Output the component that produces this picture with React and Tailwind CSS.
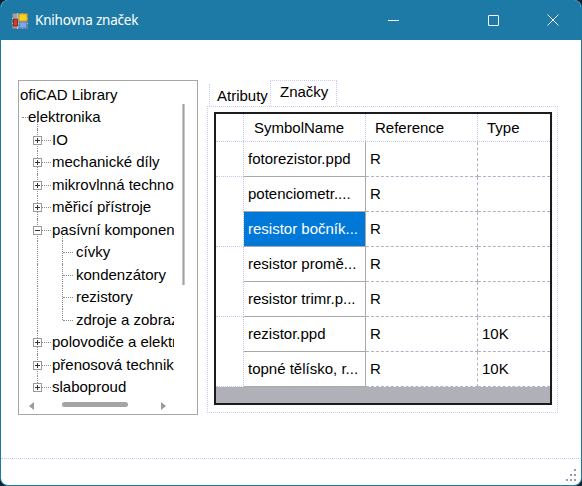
import React from "react";

const treeRows = [
  { text: "ofiCAD Library", x: 20 },
  { text: "elektronika", x: 28, dash: [22, 27], vStart: true },
  { text: "IO", x: 52, box: "+", v1: "full" },
  { text: "mechanické díly", x: 52, box: "+", v1: "full" },
  { text: "mikrovlnná technologie", x: 52, box: "+", v1: "full" },
  { text: "měřicí přístroje", x: 52, box: "+", v1: "full" },
  { text: "pasívní komponenty", x: 52, box: "-", v1: "full", v2Start: true },
  { text: "cívky", x: 76, v1: "full", v2: "full" },
  { text: "kondenzátory", x: 76, v1: "full", v2: "full" },
  { text: "rezistory", x: 76, v1: "full", v2: "full" },
  { text: "zdroje a zobrazovače", x: 76, v1: "full", v2: "half" },
  { text: "polovodiče a elektronky", x: 52, box: "+", v1: "full" },
  { text: "přenosová technika", x: 52, box: "+", v1: "full" },
  { text: "slaboproud", x: 52, box: "+", v1: "half" },
];

const symbols = [
  { name: "fotorezistor.ppd", ref: "R", type: "" },
  { name: "potenciometr....", ref: "R", type: "" },
  { name: "resistor bočník...", ref: "R", type: "", selected: true },
  { name: "resistor promě...", ref: "R", type: "" },
  { name: "resistor trimr.p...", ref: "R", type: "" },
  { name: "rezistor.ppd", ref: "R", type: "10K" },
  { name: "topné tělísko, r...", ref: "R", type: "10K" },
];

function TreeRow({ row }) {
  // x positions are page coords, tree inner starts at x=19
  const off = 19;
  return (
    <div className="relative h-[22.5px] whitespace-nowrap">
      {row.vStart && (
        <span className="absolute left-[18px] top-[15px] bottom-0 border-l border-dotted border-[#8a8a8a]" />
      )}
      {row.v1 && (
        <span
          className={`absolute left-[18px] top-0 border-l border-dotted border-[#8a8a8a] ${
            row.v1 === "half" ? "h-[7px]" : "bottom-0"
          }`}
        />
      )}
      {row.v2Start && (
        <span className="absolute left-[43px] top-[15px] bottom-0 border-l border-dotted border-[#8a8a8a]" />
      )}
      {row.v2 && (
        <span
          className={`absolute left-[43px] top-0 border-l border-dotted border-[#8a8a8a] ${
            row.v2 === "half" ? "h-[11px]" : "bottom-0"
          }`}
        />
      )}
      {row.v2 && (
        <span className="absolute left-[44px] top-[11px] w-[10px] border-t border-dotted border-[#8a8a8a]" />
      )}
      {row.dash && (
        <span className="absolute left-[3px] top-[11px] w-[6px] border-t border-dotted border-[#8a8a8a]" />
      )}
      {row.box && (
        <>
          <span className="absolute left-[23px] top-[11px] w-[9px] border-t border-dotted border-[#8a8a8a]" />
          <span className="absolute left-[14px] top-[7px] w-[9px] h-[9px] border border-[#9a9a9a] bg-white flex items-center justify-center">
            <span className="absolute w-[5px] h-[1px] bg-[#333]" />
            {row.box === "+" && <span className="absolute w-[1px] h-[5px] bg-[#333]" />}
          </span>
        </>
      )}
      <span
        className="absolute top-0 h-full flex items-center text-[15px] text-black"
        style={{ left: row.x - off }}
      >
        {row.text}
      </span>
    </div>
  );
}

function TitleIcon() {
  return (
    <svg width="16" height="16" viewBox="0 0 16 16">
      <rect x="0.5" y="0.5" width="15" height="15" fill="#8fa3b0" stroke="#6f808c" />
      <path d="M0 5.5h16M0 10.5h16M5.5 0v16M10.5 0v16" stroke="#b8c6cf" strokeWidth="1" />
      <rect x="1.5" y="6" width="4" height="7" fill="#d23a2a" stroke="#7d1a12" strokeWidth="0.8" />
      <rect x="7" y="1" width="8" height="7" fill="#f7d21c" stroke="#c49a10" strokeWidth="0.8" />
      <rect x="7.5" y="9" width="7" height="6" fill="#7ea8ea" stroke="#4f7bc4" strokeWidth="0.8" />
    </svg>
  );
}

export default function App() {
  return (
    <div className="w-[582px] h-[486px] bg-[#0d2430] font-['Liberation_Sans',Arial,sans-serif]">
      <div className="w-full h-full flex flex-col rounded-[8px] overflow-hidden border border-t-0 border-[#1c79a5] bg-white">
        {/* Title bar */}
        <div className="h-[40px] shrink-0 bg-[#1d7aa7] flex items-center text-white">
          <div className="ml-[11px] mt-[1px]">
            <TitleIcon />
          </div>
          <span className="ml-[7px] text-[13.5px] font-['Noto_Sans',sans-serif] tracking-[-0.2px]">Knihovna značek</span>
          <div className="ml-auto flex items-center h-full">
            <div className="w-[46px] h-full flex items-center justify-center mr-[54px]">
              <span className="w-[11px] h-[1px] bg-white" />
            </div>
            <div className="w-[46px] h-full flex items-center justify-center mr-[14px]">
              <span className="w-[11px] h-[11px] border border-white rounded-[1px]" />
            </div>
            <div className="w-[46px] h-full flex items-center justify-center mr-[5px]">
              <svg width="12" height="12" viewBox="0 0 12 12">
                <path d="M0.5 0.5L11.5 11.5M11.5 0.5L0.5 11.5" stroke="white" strokeWidth="1" />
              </svg>
            </div>
          </div>
        </div>

        {/* Body */}
        <div className="flex-1 flex flex-col">
          <div className="flex pt-[40px] pl-[17px]">
            {/* Tree view */}
            <div className="w-[180px] h-[335px] border border-[#a6a6a6] flex flex-col">
              <div className="flex h-[318px]">
                <div className="w-[155px] overflow-hidden pt-[2.75px]">
                  {treeRows.map((r, i) => (
                    <TreeRow key={i} row={r} />
                  ))}
                </div>
                <div className="flex-1 relative">
                  <span className="absolute left-[8px] top-[23px] w-[3px] h-[181px] bg-[#a2a2a2] border-x border-[#c6c6c6]" />
                </div>
              </div>
              <div className="flex-1 relative">
                <span className="absolute left-[10px] top-[3px] w-0 h-0 border-y-[4px] border-y-transparent border-r-[5px] border-r-[#9a9a9a]" />
                <span className="absolute left-[43px] top-[3px] w-[66px] h-[5px] rounded-full bg-[#a4a4a4]" />
                <span className="absolute left-[142px] top-[3px] w-0 h-0 border-y-[4px] border-y-transparent border-l-[5px] border-l-[#9a9a9a]" />
              </div>
            </div>

            {/* Tab control */}
            <div className="ml-[9px] w-[351px] flex flex-col">
              <div className="h-[26px] flex items-end text-[15px] text-black">
                <div className="ml-[2px] w-[61px] h-[22px] flex items-center pl-[7px] pt-[2px] border-l border-dotted border-[#d0d0f4]">
                  Atributy
                </div>
                <div className="w-[67px] h-[26px] flex items-center pl-[9px] pb-[2px] border border-b-0 border-dotted border-[#ccccf2]">
                  Značky
                </div>
              </div>
              <div className="h-[307px] border border-dotted border-[#ccccf2] pl-[6px] pt-[5px]">
                {/* Data grid */}
                <div className="w-[338px] h-[293px] border-2 border-[#1b1b1b] flex flex-col text-[15px] text-black">
                  <div className="h-[28px] grid grid-cols-[28px_122px_112px_72px] border-b border-dotted border-[#c4c4ee]">
                    <div className="border-r border-dotted border-[#c4c4ee]" />
                    <div className="flex items-center pl-[10px] pt-[2px] border-r border-dotted border-[#c4c4ee]">SymbolName</div>
                    <div className="flex items-center pl-[9px] pt-[2px] border-r border-dotted border-[#c4c4ee]">Reference</div>
                    <div className="flex items-center pl-[9px] pt-[2px]">Type</div>
                  </div>
                  {symbols.map((s, i) => (
                    <div key={i} className="h-[35px] grid grid-cols-[28px_122px_112px_72px]">
                      <div
                        className={`border-r border-dotted border-[#c4c4ee] ${
                          i % 2 === 0 ? "border-b" : ""
                        }`}
                      />
                      <div
                        className={`flex items-center pl-[4px] pt-[1px] border-r border-b border-[#a9a9a9] whitespace-nowrap overflow-hidden ${
                          s.selected ? "bg-[#0078d7] text-white" : ""
                        }`}
                      >
                        {s.name}
                      </div>
                      <div className="flex items-center pl-[4px] pt-[1px] border-r border-b border-dashed border-[#b0b0c8]">
                        {s.ref}
                      </div>
                      <div className="flex items-center pl-[4px] pt-[1px] border-b border-dashed border-[#b0b0c8]">
                        {s.type}
                      </div>
                    </div>
                  ))}
                  <div className="flex-1 bg-[#b0b0b8]" />
                </div>
              </div>
            </div>
          </div>

          {/* Status strip */}
          <div className="mt-auto h-[27px] border-t border-dotted border-[#c4c4ee] relative">
            <span className="absolute right-[5px] bottom-[4px] w-[2px] h-[2px] bg-[#9a9ab8]" />
            <span className="absolute right-[9px] bottom-[4px] w-[2px] h-[2px] bg-[#9a9ab8]" />
            <span className="absolute right-[13px] bottom-[4px] w-[2px] h-[2px] bg-[#9a9ab8]" />
            <span className="absolute right-[5px] bottom-[9px] w-[2px] h-[2px] bg-[#9a9ab8]" />
            <span className="absolute right-[9px] bottom-[9px] w-[2px] h-[2px] bg-[#9a9ab8]" />
            <span className="absolute right-[5px] bottom-[14px] w-[2px] h-[2px] bg-[#9a9ab8]" />
          </div>
        </div>
      </div>
    </div>
  );
}
